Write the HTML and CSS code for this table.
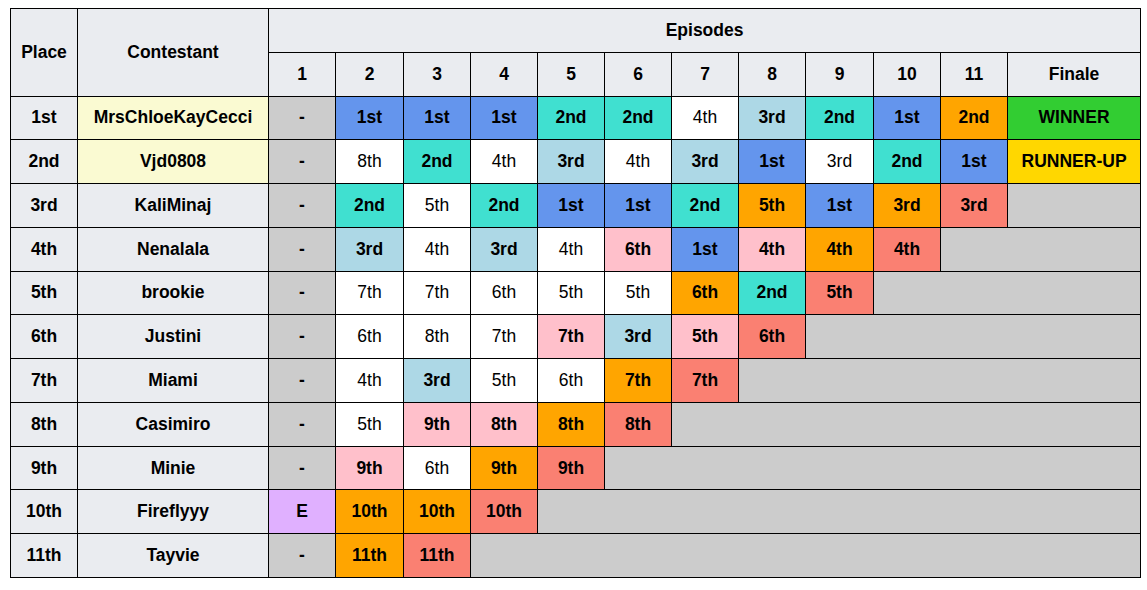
FILE: index.html
```html
<!DOCTYPE html>
<html>
<head>
<meta charset="utf-8">
<link rel="stylesheet" href="styles.css">
</head>
<body>
<table class="results">
  <colgroup>
    <col class="c-place"><col class="c-name">
    <col class="c-ep"><col class="c-ep2"><col class="c-ep"><col class="c-ep"><col class="c-ep"><col class="c-ep"><col class="c-ep"><col class="c-ep"><col class="c-ep2"><col class="c-ep"><col class="c-ep">
    <col class="c-fin">
  </colgroup>
  <thead>
    <tr>
      <th rowspan="2">Place</th>
      <th rowspan="2">Contestant</th>
      <th colspan="12">Episodes</th>
    </tr>
    <tr>
      <th>1</th><th>2</th><th>3</th><th>4</th><th>5</th><th>6</th><th>7</th><th>8</th><th>9</th><th>10</th><th>11</th><th>Finale</th>
    </tr>
  </thead>
  <tbody>
    <tr>
      <th>1st</th><td class="fin">MrsChloeKayCecci</td>
      <td class="na">-</td><td class="blue">1st</td><td class="blue">1st</td><td class="blue">1st</td><td class="turq">2nd</td><td class="turq">2nd</td><td class="w">4th</td><td class="lb">3rd</td><td class="turq">2nd</td><td class="blue">1st</td><td class="or">2nd</td><td class="win">WINNER</td>
    </tr>
    <tr>
      <th>2nd</th><td class="fin">Vjd0808</td>
      <td class="na">-</td><td class="w">8th</td><td class="turq">2nd</td><td class="w">4th</td><td class="lb">3rd</td><td class="w">4th</td><td class="lb">3rd</td><td class="blue">1st</td><td class="w">3rd</td><td class="turq">2nd</td><td class="blue">1st</td><td class="run">RUNNER-UP</td>
    </tr>
    <tr>
      <th>3rd</th><th>KaliMinaj</th>
      <td class="na">-</td><td class="turq">2nd</td><td class="w">5th</td><td class="turq">2nd</td><td class="blue">1st</td><td class="blue">1st</td><td class="turq">2nd</td><td class="or">5th</td><td class="blue">1st</td><td class="or">3rd</td><td class="sal">3rd</td><td class="na"></td>
    </tr>
    <tr>
      <th>4th</th><th>Nenalala</th>
      <td class="na">-</td><td class="lb">3rd</td><td class="w">4th</td><td class="lb">3rd</td><td class="w">4th</td><td class="pk">6th</td><td class="blue">1st</td><td class="pk">4th</td><td class="or">4th</td><td class="sal">4th</td><td class="na" colspan="2"></td>
    </tr>
    <tr>
      <th>5th</th><th>brookie</th>
      <td class="na">-</td><td class="w">7th</td><td class="w">7th</td><td class="w">6th</td><td class="w">5th</td><td class="w">5th</td><td class="or">6th</td><td class="turq">2nd</td><td class="sal">5th</td><td class="na" colspan="3"></td>
    </tr>
    <tr>
      <th>6th</th><th>Justini</th>
      <td class="na">-</td><td class="w">6th</td><td class="w">8th</td><td class="w">7th</td><td class="pk">7th</td><td class="lb">3rd</td><td class="pk">5th</td><td class="sal">6th</td><td class="na" colspan="4"></td>
    </tr>
    <tr>
      <th>7th</th><th>Miami</th>
      <td class="na">-</td><td class="w">4th</td><td class="lb">3rd</td><td class="w">5th</td><td class="w">6th</td><td class="or">7th</td><td class="sal">7th</td><td class="na" colspan="5"></td>
    </tr>
    <tr>
      <th>8th</th><th>Casimiro</th>
      <td class="na">-</td><td class="w">5th</td><td class="pk">9th</td><td class="pk">8th</td><td class="or">8th</td><td class="sal">8th</td><td class="na" colspan="6"></td>
    </tr>
    <tr>
      <th>9th</th><th>Minie</th>
      <td class="na">-</td><td class="pk">9th</td><td class="w">6th</td><td class="or">9th</td><td class="sal">9th</td><td class="na" colspan="7"></td>
    </tr>
    <tr>
      <th>10th</th><th>Fireflyyy</th>
      <td class="elim">E</td><td class="or">10th</td><td class="or">10th</td><td class="sal">10th</td><td class="na" colspan="8"></td>
    </tr>
    <tr>
      <th>11th</th><th>Tayvie</th>
      <td class="na">-</td><td class="or">11th</td><td class="sal">11th</td><td class="na" colspan="9"></td>
    </tr>
  </tbody>
</table>
</body>
</html>
```

FILE: styles.css
```css
html, body {
  background: #ffffff;
}
body {
  margin: 8px 0 0 10px;
  font-family: "Liberation Sans", Arial, sans-serif;
  font-size: 17.5px;
  color: #000000;
}
.results {
  border-collapse: collapse;
  table-layout: fixed;
  width: 1131px;
}
.c-place { width: 67px; }
.c-name { width: 191px; }
.c-ep { width: 67px; }
.c-ep2 { width: 68px; }
.c-fin { width: 133px; }
.results tr {
  height: 43.77px;
}
.results th,
.results td {
  border: 1px solid #000000;
  padding: 0 2px;
  text-align: center;
  vertical-align: middle;
  font-weight: bold;
  white-space: nowrap;
  overflow: hidden;
}
.results th {
  background: #eaecf0;
}
.results td.w {
  background: #ffffff;
  font-weight: normal;
}
.fin { background: #fafad2; }
.na { background: #cccccc; }
.blue { background: #6495ed; }
.turq { background: #40e0d0; }
.lb { background: #add8e6; }
.or { background: #ffa500; }
.sal { background: #fa8072; }
.pk { background: #ffc0cb; }
.win { background: #32cd32; }
.run { background: #ffd700; }
.elim { background: #e0b0ff; }
```
